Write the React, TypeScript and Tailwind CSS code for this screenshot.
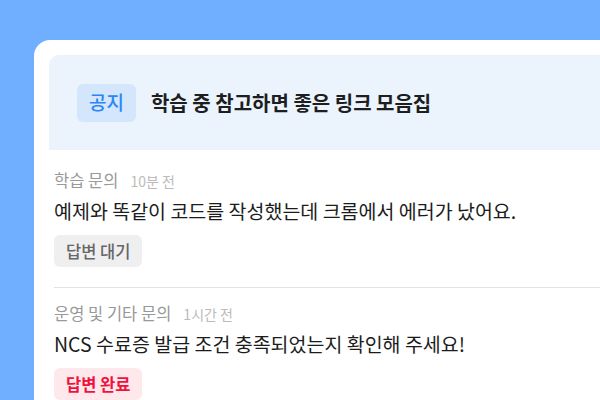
import React from 'react'

type Question = {
  category: string
  time: string
  title: string
  answered: boolean
}

const questions: Question[] = [
  {
    category: '학습 문의',
    time: '10분 전',
    title: '예제와 똑같이 코드를 작성했는데 크롬에서 에러가 났어요.',
    answered: false,
  },
  {
    category: '운영 및 기타 문의',
    time: '1시간 전',
    title: 'NCS 수료증 발급 조건 충족되었는지 확인해 주세요!',
    answered: true,
  },
]

function StatusBadge({ answered }: { answered: boolean }) {
  if (answered) {
    return (
      <span className="inline-flex h-[32px] items-center rounded-md bg-[#ffe8ec] px-[12px] text-[16.5px] font-semibold text-[#f0123c]">
        답변 완료
      </span>
    )
  }
  return (
    <span className="inline-flex h-[32px] items-center rounded-md bg-[#efefef] px-[12px] text-[16.5px] font-medium text-[#666666]">
      답변 대기
    </span>
  )
}

function QuestionRow({ q }: { q: Question }) {
  return (
    <li className="border-b border-[#e2e2e2] pt-[15px] pb-[20px]">
      <div className="flex items-baseline gap-[12px] leading-[20px]">
        <span className="text-[16.5px] text-[#999999]">{q.category}</span>
        <span className="text-[14px] text-[#bbbbbb]">{q.time}</span>
      </div>
      <p className="mt-[6px] text-[19.5px] leading-[28px] text-[#1c1c1c]">{q.title}</p>
      <div className="mt-[10px] flex">
        <StatusBadge answered={q.answered} />
      </div>
    </li>
  )
}

export default function App() {
  return (
    <div
      className="h-[400px] w-[600px] overflow-hidden bg-[#70aeff] pt-[40px] pl-[34px]"
      style={{ fontFamily: '"Noto Sans CJK KR", "Noto Sans", sans-serif' }}
    >
      <div className="w-[620px] rounded-tl-[16px] bg-white pt-[15px] pl-[15px]">
        {/* 공지 배너 */}
        <div className="flex h-[95px] items-center gap-[15px] rounded-tl-[10px] bg-[#ebf3fd] pl-[28px]">
          <span className="inline-flex h-[38px] items-center rounded-md bg-[#d4e6fc] px-[12px] text-[19px] font-medium text-[#2b86f6]">
            공지
          </span>
          <h2 className="text-[20px] font-bold text-[#1e1e1e]">
            학습 중 참고하면 좋은 링크 모음집
          </h2>
        </div>

        {/* 질문 목록 */}
        <ul className="pt-[5px] pl-[5px]">
          {questions.map((q) => (
            <QuestionRow key={q.title} q={q} />
          ))}
        </ul>
      </div>
    </div>
  )
}
